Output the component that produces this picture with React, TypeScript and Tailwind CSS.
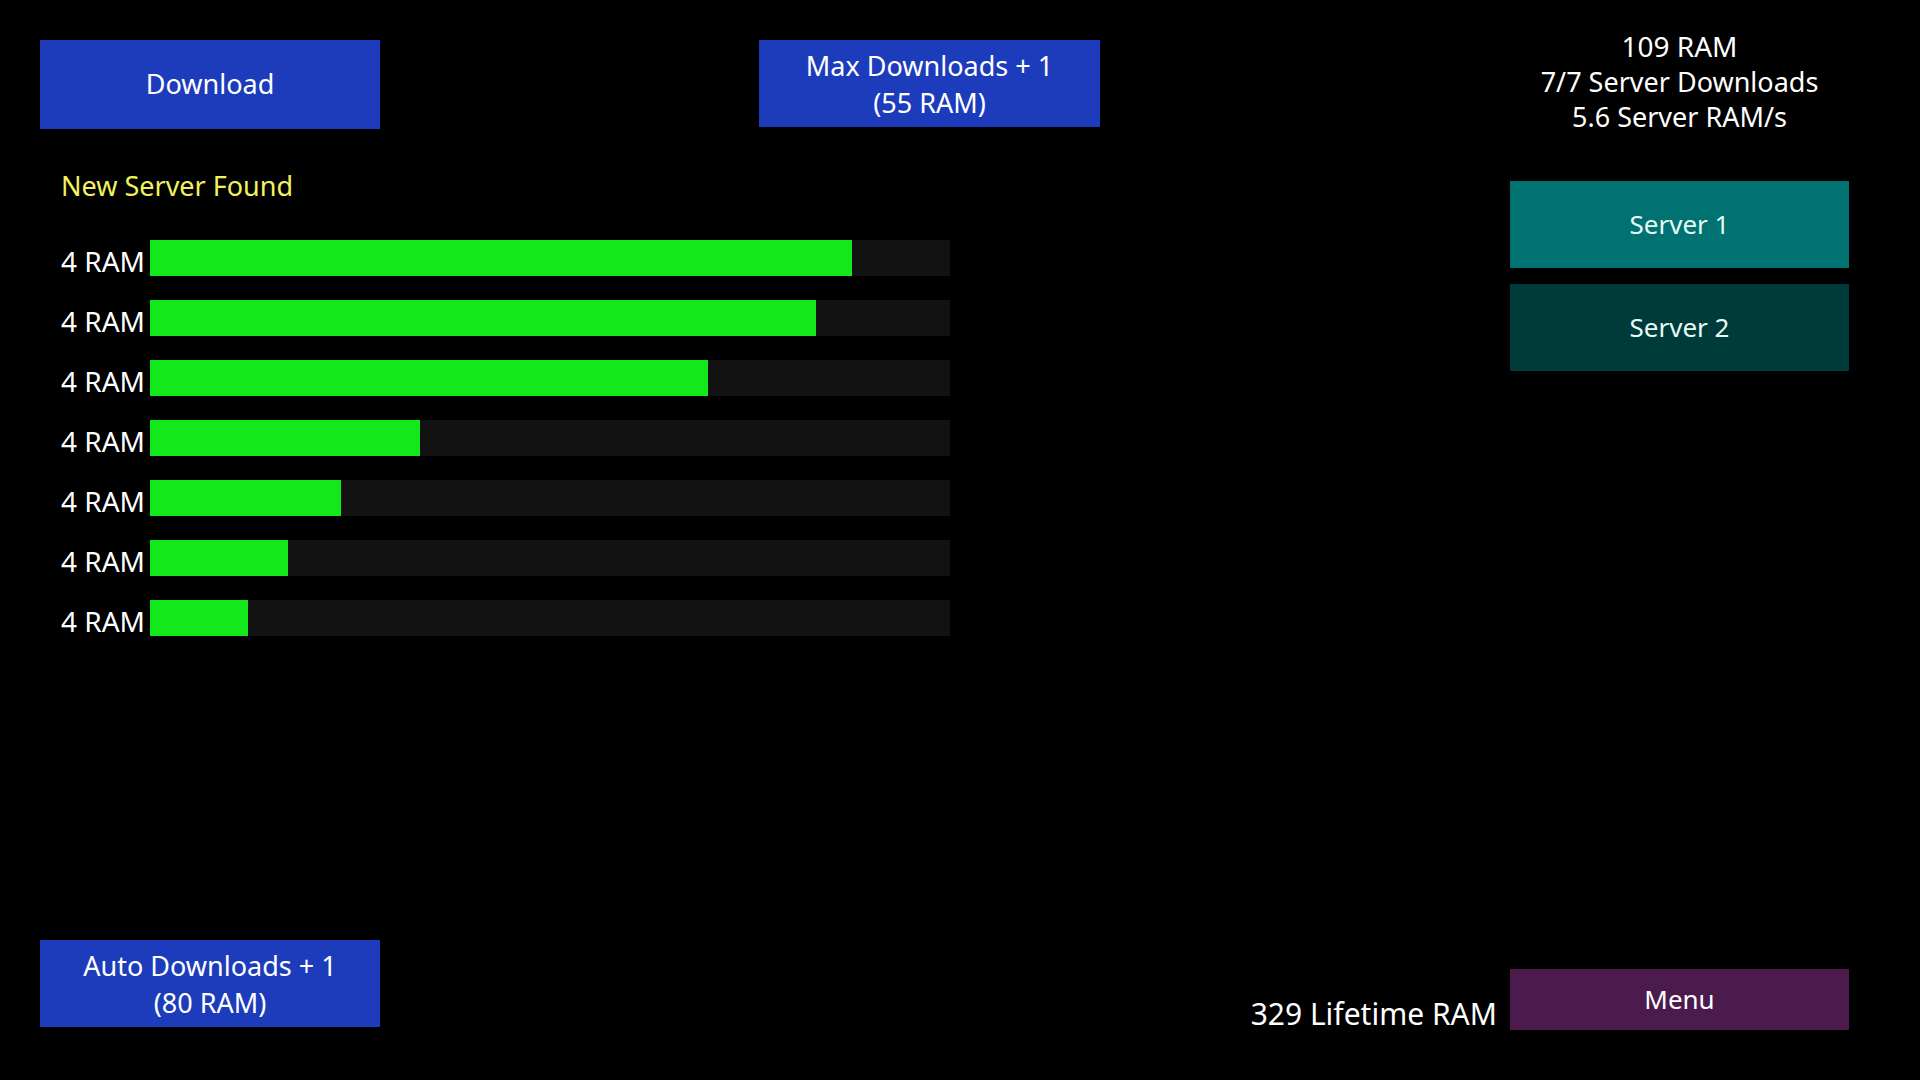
import React from "react";

const bars = [0.877, 0.832, 0.698, 0.338, 0.239, 0.172, 0.123];

export default function App() {
  return (
    <div
      className="flex h-[1080px] w-[1920px] bg-black text-white overflow-hidden"
      style={{ fontFamily: '"Noto Sans", "Open Sans", sans-serif' }}
    >
      {/* Left area */}
      <div className="flex w-[1470px] flex-col pl-[40px] pt-[40px] pb-[53px]">
        <div className="flex items-start gap-[379px]">
          <button className="flex h-[89px] w-[340px] items-center justify-center bg-[#1c3cbc] text-[27px] text-white">
            Download
          </button>
          <button className="flex h-[87px] w-[341px] flex-col items-center justify-center bg-[#1c3cbc] text-[27px] leading-[37px] text-white">
            <span>Max Downloads + 1</span>
            <span>(55 RAM)</span>
          </button>
        </div>
        <div className="mt-[39px] pl-[21px] text-[27px] leading-[36px] text-[#f2f25c]">
          New Server Found
        </div>
        <div className="mt-[36px] flex flex-col gap-[24px]">
          {bars.map((p, i) => (
            <div key={i} className="flex items-center">
              <div className="w-[110px] pr-[5px] text-right text-[28px] leading-[36px] translate-y-[3px] whitespace-nowrap">
                4 RAM
              </div>
              <div className="h-[36px] w-[800px] bg-[#121212]">
                <div className="h-full bg-[#13e81b]" style={{ width: `${p * 100}%` }} />
              </div>
            </div>
          ))}
        </div>
        <button className="mt-auto flex h-[87px] w-[340px] flex-col items-center justify-center bg-[#1c3cbc] text-[27px] leading-[37px] text-white">
          <span>Auto Downloads + 1</span>
          <span>(80 RAM)</span>
        </button>
      </div>

      {/* Right area */}
      <div className="flex flex-1 flex-col items-end pr-[71px] pt-[29px] pb-[50px]">
        <div className="flex w-[339px] flex-col items-center text-[27px] leading-[35px]">
          <span className="text-[28px]">109 RAM</span>
          <span>7/7 Server Downloads</span>
          <span>5.6 Server RAM/s</span>
        </div>
        <div className="mt-[47px] flex w-[339px] flex-col gap-[16px]">
          <button className="flex h-[87px] w-full items-center justify-center bg-[#007272] text-[26px] text-[#e6fbf6]">
            Server 1
          </button>
          <button className="flex h-[87px] w-full items-center justify-center bg-[#003b3b] text-[26px] text-[#e6fbf6]">
            Server 2
          </button>
        </div>
        <div className="mt-auto flex items-end gap-[13px]">
          <span className="whitespace-nowrap text-[30px] leading-[40px] translate-y-[4px]">
            329 Lifetime RAM
          </span>
          <button className="flex h-[61px] w-[339px] items-center justify-center bg-[#4c1b4e] text-[26px] text-white">
            Menu
          </button>
        </div>
      </div>
    </div>
  );
}
